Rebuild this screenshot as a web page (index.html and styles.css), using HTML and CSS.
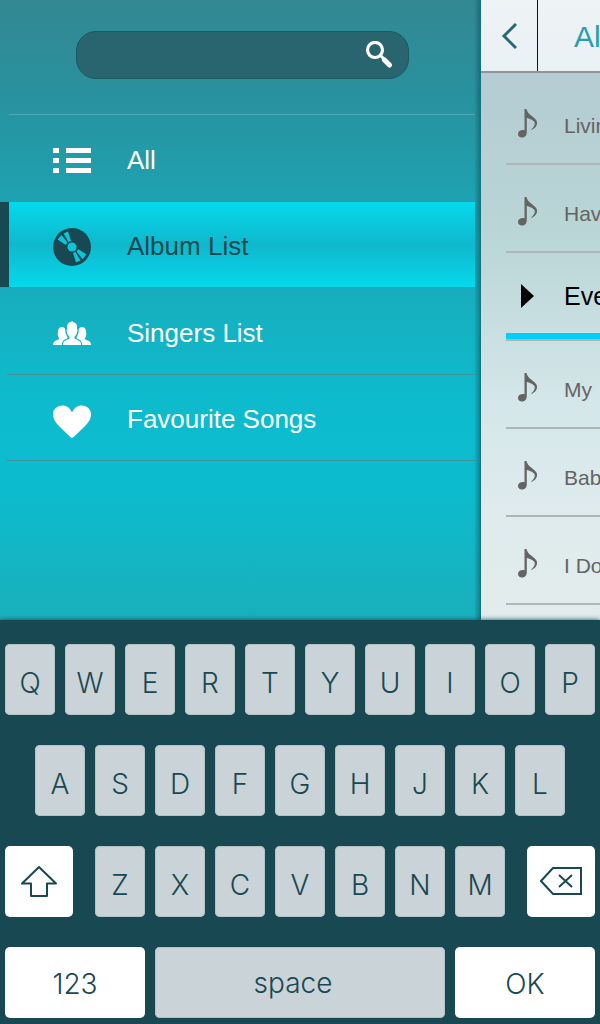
FILE: index.html
```html
<!DOCTYPE html>
<html lang="en">
<head>
<meta charset="utf-8">
<meta name="viewport" content="width=device-width, initial-scale=1">
<title>Music library</title>
<link rel="stylesheet" href="styles.css">
</head>
<body>
<svg class="defs" width="0" height="0" aria-hidden="true">
  <symbol id="note" viewBox="0 0 20 29">
    <path d="M6.500 0h2C9.500 4 12 5.500 15 8c3 2.500 4.500 4 4 7-.5 2.500-2.500 4.500-5.500 6l-.4-.5c2.500-2 4-4.500 3.700-6.500C16.200 11.500 12 9.500 8.800 9V23.500C8.800 26.500 6.500 28.500 4 28.500 1.500 28.500 0 27 0 25 0 22.300 3 20.500 6.500 21.300Z"/>
  </symbol>
</svg>
<main class="app">
  <aside class="sidebar">
    <form class="search" role="search">
      <input class="search-input" type="search" aria-label="Search">
      <button class="search-button" type="button" aria-label="Search">
        <svg width="28" height="28" viewBox="0 0 28 28" fill="none" stroke="#fff"><circle cx="10" cy="9" r="7.500" stroke-width="3.200"/><path d="M15 14l4 4" stroke-width="3"/><path d="M19.500 19l5 5" stroke-width="5" stroke-linecap="round"/></svg>
      </button>
    </form>
    <nav class="menu">
      <a class="menu-item" href="#all">
        <svg width="38" height="38" viewBox="0 0 38 38" fill="#fff"><path d="M0 7h6v5H0zM0 17h6v5H0zM0 27h6v5H0zM13 7h25v5H13zM13 17h25v5H13zM13 27h25v5H13z"/></svg>
        <span>All</span>
      </a>
      <a class="menu-item is-active" href="#albums" aria-current="page">
        <svg width="38" height="38" viewBox="0 0 38 38"><circle cx="19" cy="19" r="19" fill="#184952"/><g fill="#0dc5d8"><circle cx="19" cy="19" r="4.500"/><path d="M10.500 5.500l4.500-2 3 9.500-2.500 1zM4.500 11.500l4-4.500 6 7.500-2 2.300z"/><path d="M10.500 5.500l4.500-2 3 9.500-2.500 1zM4.500 11.500l4-4.500 6 7.500-2 2.300z" transform="rotate(180 19 19)"/></g></svg>
        <span>Album List</span>
      </a>
      <a class="menu-item" href="#singers">
        <svg width="38" height="38" viewBox="0 0 38 38" fill="#fff"><path d="M10 31c0-4 2-4.500 5-5.500 2-.7 2-2 .8-3.500-1.300-1.500-2-3-1.900-4.500l-.4-1.500.6-.8C13.500 10 15.500 8 18 8l1-1 1.500 1.200c2.700.3 4 2.800 3.500 7l.6.8-.5 1.500c0 1.800-.8 3.200-2 4.500-1.200 1.500-.8 2.800 1 3.500 3 1 5 1.500 5 5.500z"/><path d="M0 31c0-3 1.500-3.800 4.500-5 1.800-.8 2-1.500 1-3-1-1.500-.8-3-.6-5C5 14.500 6.500 13 9 13c1.500 0 2.700.7 3.200 2l.3 4 1.800 4c.7 1.500-.3 1.800-1.800 2.300-2.500.9-3.500 2.700-3.700 5.700z"/><path d="M38 31c0-3-1.500-3.800-4.500-5-1.800-.8-2-1.500-1-3 1-1.500.8-3 .6-5-.1-3.500-1.600-5-4.100-5-1.500 0-2.700.7-3.200 2l-.3 4-1.800 4c-.7 1.500.3 1.800 1.800 2.300 2.500.9 3.500 2.700 3.700 5.700z"/></svg>
        <span>Singers List</span>
      </a>
      <a class="menu-item" href="#favourites">
        <svg width="38" height="38" viewBox="0 0 38 38" fill="#fff"><path d="M19 37C17.500 36.500 15 33.500 9 28 3 22.500 0 18.500 0 13.500 0 8 4 4.500 9.500 4.500c4.300 0 7.500 2.500 9.500 7 2-4.500 5.200-7 9.500-7C34 4.500 38 8 38 13.500c0 5-3 9-9 14.500-6 5.500-8.500 8.500-10 9z"/></svg>
        <span>Favourite Songs</span>
      </a>
    </nav>
  </aside>
  <section class="songs">
    <header class="songs-header">
      <button class="back" type="button" aria-label="Back">
        <svg width="16" height="26" viewBox="0 0 16 26" fill="none" stroke="#286872" stroke-width="3"><path d="M15 1L3 13l12 12"/></svg>
      </button>
      <h1 class="songs-title">Al</h1>
    </header>
    <ul class="song-list">
      <li class="song"><svg width="20" height="29"><use href="#note"/></svg><span>Livin</span></li>
      <li class="song"><svg width="20" height="29"><use href="#note"/></svg><span>Hav</span></li>
      <li class="song is-playing"><svg width="20" height="24"><path d="M3 0l13 12L3 24z"/></svg><span>Eve</span></li>
      <li class="song"><svg width="20" height="29"><use href="#note"/></svg><span>My</span></li>
      <li class="song"><svg width="20" height="29"><use href="#note"/></svg><span>Bab</span></li>
      <li class="song"><svg width="20" height="29"><use href="#note"/></svg><span>I Do</span></li>
    </ul>
  </section>
</main>
<section class="keyboard" aria-label="Keyboard">
  <div class="key-row">
    <button class="key">Q</button><button class="key">W</button><button class="key">E</button><button class="key">R</button><button class="key">T</button><button class="key">Y</button><button class="key">U</button><button class="key">I</button><button class="key">O</button><button class="key">P</button>
  </div>
  <div class="key-row key-row-inset">
    <button class="key">A</button><button class="key">S</button><button class="key">D</button><button class="key">F</button><button class="key">G</button><button class="key">H</button><button class="key">J</button><button class="key">K</button><button class="key">L</button>
  </div>
  <div class="key-row key-row-wide">
    <button class="key key-light key-icon" aria-label="Shift">
      <svg width="38" height="34" viewBox="0 0 38 34" fill="none" stroke="#184952" stroke-width="2" stroke-linejoin="round"><path d="M19 2L2 18.500h9V31h16V18.500h9z"/></svg>
    </button>
    <div class="key-group">
      <button class="key">Z</button><button class="key">X</button><button class="key">C</button><button class="key">V</button><button class="key">B</button><button class="key">N</button><button class="key">M</button>
    </div>
    <button class="key key-light key-icon" aria-label="Delete">
      <svg width="42" height="30" viewBox="0 0 42 30" fill="none" stroke="#184952" stroke-width="2"><path d="M13 1h28v26H13L1 14z"/><path d="M19 8l13 12M32 8L19 20"/></svg>
    </button>
  </div>
  <div class="key-row key-row-bottom">
    <button class="key key-light key-large">123</button>
    <button class="key key-space">space</button>
    <button class="key key-light key-large">OK</button>
  </div>
</section>
</body>
</html>
```
FILE: styles.css
```css
* { box-sizing: border-box; }

body {
  margin: 0;
  min-height: 100vh;
  display: flex;
  flex-direction: column;
  overflow-x: hidden;
  font-family: "Liberation Sans", Arial, sans-serif;
  background: #184952;
}

button { font: inherit; color: inherit; border: 0; padding: 0; background: none; }
svg { display: block; flex: none; }
.defs { position: absolute; }

.app { flex: 1; display: flex; overflow: hidden; }

.sidebar {
  flex: 0 0 80%;
  min-width: 0;
  box-sizing: content-box;
  border-right: 1px solid #137582;
  padding-top: 31px;
  background:
    linear-gradient(to left, rgba(10, 80, 95, 0.5), transparent 6px),
    linear-gradient(#328893 0, #29919d 90px, #1ea2b1 200px, #16afbf 300px, #0dbbcd 400px, #0cbccd 490px, #1aafbc 620px);
}

.search {
  display: flex;
  align-items: center;
  height: 48px;
  margin: 0 71px 35px 76px;
  padding-right: 15px;
  border: 1px solid #1b5765;
  border-radius: 20px;
  background: #29656f;
}
.search-input {
  flex: 1;
  min-width: 0;
  padding: 0 16px;
  border: 0;
  outline: 0;
  background: none;
  color: #fff;
  font: inherit;
  font-size: 22px;
}

.menu {
  display: grid;
  grid-auto-rows: 1fr;
  min-height: 347px;
  margin-right: 5px;
  padding-top: 1px;
  background: linear-gradient(#4eaab7, #4eaab7) 9px 0 / 100% 1px no-repeat;
}
.menu-item {
  display: flex;
  align-items: center;
  gap: 36px;
  margin-left: 7px;
  padding: 5px 0 0 46px;
  border-bottom: 1px solid #3f939b;
  color: #fff;
  font-size: 26px;
  text-decoration: none;
}
.menu-item.is-active {
  margin-left: 0;
  padding-left: 53px;
  color: #184952;
  background: linear-gradient(#05d9ec, #0fb8cc 50%, #05d9ec);
  box-shadow: inset 9px 0 #184952;
}

.songs {
  flex: 1;
  min-width: 0;
  overflow: hidden;
  background: linear-gradient(#b4ccd2 72px, #b9d5d6 230px, #d5e7ea 410px, #dfebed 510px, #e2ecec);
}
.songs-header {
  display: flex;
  height: 73px;
  border-bottom: 2px solid #8b9799;
  background: linear-gradient(#eef3f4, #eaf1f4);
}
.back {
  flex: none;
  display: flex;
  align-items: center;
  width: 57px;
  padding-left: 20px;
  border-right: 1px solid #111;
}
.songs-title {
  margin: 0;
  padding: 20px 0 0 36px;
  color: #2a9db3;
  font-size: 30px;
  font-weight: 400;
  line-height: 34px;
}

.song-list { margin: 0; padding: 4px 0 0 25px; list-style: none; }
.song {
  display: flex;
  align-items: center;
  gap: 26px;
  height: 88px;
  padding: 6px 0 0 12px;
  border-bottom: 2px solid #adb6b8;
  color: #646464;
  fill: #646464;
  font-size: 21px;
  white-space: nowrap;
}
.song span { padding-top: 6px; }
.song.is-playing {
  padding-top: 0;
  color: #000;
  fill: #000;
  font-size: 25px;
  box-shadow: inset 0 -6px #00cffa;
}
.song.is-playing span { padding: 0; }

.keyboard {
  position: relative;
  display: flex;
  flex-direction: column;
  gap: 30px;
  padding: 24px 5px 6px;
  color: #184952;
  background: #184952;
  box-shadow: 0 0 5px #184952;
  font-family: Inter, "Liberation Sans", sans-serif;
  font-size: 28px;
  font-weight: 300;
}
.key-row { display: flex; gap: 10px; }
.key-row-inset { padding: 0 30px; }
.key-row-wide { gap: 22px; }
.key-row-bottom { display: grid; grid-template-columns: 14fr 29fr 14fr; }
.key-group { flex: 410 1 0; display: flex; gap: 10px; }
.key {
  flex: 1 1 0;
  min-width: 0;
  height: 71px;
  padding-top: 6px;
  border-radius: 5px;
  background: #cad3d7;
  box-shadow: inset 0 0 0 1px #b4c1c5;
}
.key-light { background: #fff; box-shadow: none; }
.key-icon { flex: 68 1 0; display: grid; place-items: center; padding: 0; }
.key-large { padding-top: 2px; }
.key-space { padding: 0 14px 0 0; }
```
